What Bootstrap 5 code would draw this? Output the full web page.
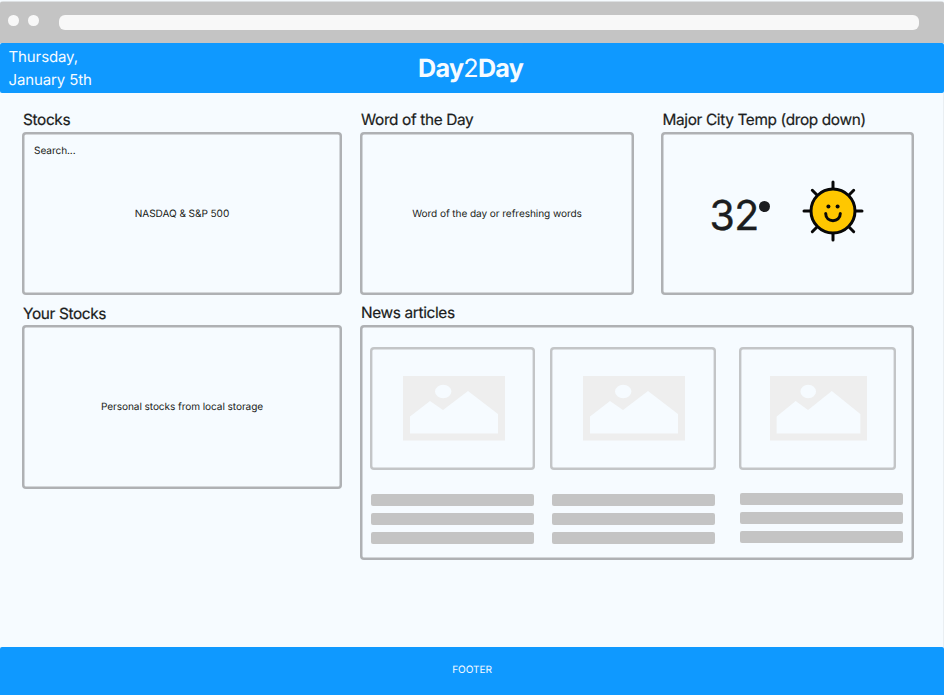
<!DOCTYPE html>
<html lang="en">
<head>
<meta charset="utf-8">
<meta name="viewport" content="width=device-width, initial-scale=1">
<title>Day2Day</title>
<link href="https://cdn.jsdelivr.net/npm/bootstrap@5.3.0/dist/css/bootstrap.min.css" rel="stylesheet">
<style>
body { font-family: Inter, sans-serif; text-rendering: geometricPrecision; background: #f6fbff; color: #1b1d20; height: 695px; overflow: hidden; border-top: 1px solid #f6fbff; }
.browser-bar { height: 42px; background: linear-gradient(#dde0e2 1px, #c4c4c4 1px); padding: 2px 25.3px 0 8.3px; border-radius: 3px 3px 0 0; }
.dot { width: 10.4px; height: 11px; border-radius: 50%; background: #f8f8f8; margin: -6px 9.8px 0 0; flex: none; }
.address { height: 15.4px; border-radius: 6px; background: #f8f8f8; margin-left: 10.3px; margin-top: -1px; }
.topbar { height: 50px; background: #0f99ff; color: #f6fbff; border-radius: 2px; }
.today { width: 410px; padding: 3px 0 0 8.5px; font-size: 15px; line-height: 22.5px; letter-spacing: -.11px; }
.brand { font-size: 25.2px; line-height: 52px; font-weight: 700; letter-spacing: -.75px; }
.brand span { font-weight: 400; }
.board { height: 554px; padding: 17px 30px 0 22px; border-right: 1px solid #e9eef2; display: grid; grid-template-columns: 320px 274px 253px; grid-template-rows: 193.5px 1fr; column-gap: 18px; }
.temp-area { margin-left: 9px; width: 253px; }
.news-area { grid-column: 2 / 4; width: 554px; }
.label-text { font-size: 15.4px; line-height: 19.4px; margin: 0 0 2.3px 1px; font-weight: 400; letter-spacing: -.36px; -webkit-text-stroke: .2px; white-space: nowrap; }
.temp-area .label-text { margin-left: 1.5px; }
.news-area .label-text { line-height: 17px; margin-bottom: 4.7px; }
.panel { height: 163.7px; border-radius: 4px; box-shadow: inset 0 0 0 2.5px #afb1b4; font-size: 10.1px; letter-spacing: -.08px; padding-top: 2px; }
.stock-search { padding: 11px 0 0 12px; line-height: 13px; height: 25px; color: #1b1d20; }
.stock-body { padding-bottom: 25px; }
.news-panel { height: 234.5px; padding: 21.7px 0 0 10px; }
.thumb { height: 123.3px; width: 165.3px; border-radius: 4px; box-shadow: inset 0 0 0 2.4px #c3c5c7; margin-bottom: 23.5px; padding-left: 2px; }
.thumb svg { width: 102px; height: 64.5px; }
.article { width: 165.3px; margin-right: 15.1px; }
.article-last { margin-left: 8px; margin-right: 0; }
.article-last .thumb { width: 157.3px; margin-bottom: 22.9px; }
.article-last .thumb svg { width: 97px; }
.line { height: 12px; width: 163px; border-radius: 2px; background: #c4c4c4; margin: 0 0 7.2px 1.2px; }
.degrees { font-size: 41px; line-height: 50px; letter-spacing: -.6px; font-weight: 400; -webkit-text-stroke: .4px; padding-left: .5px; }
.degree-dot { width: 11px; height: 11px; border-radius: 50%; background: #1b1d20; margin: 0 0 15.5px .2px; }
.sun { margin: 0 49px 7px auto; }
.footer-bar { height: 48px; background: #0f99ff; color: #f6fbff; font-size: 10.1px; letter-spacing: -.1px; border-radius: 2px 2px 0 0; padding-bottom: 1px; }
</style>
</head>
<body>
<div class="browser-bar d-flex align-items-center">
  <div class="dot"></div><div class="dot"></div>
  <div class="address flex-grow-1"></div>
</div>
<header class="topbar d-flex">
  <div class="today">Thursday,<br>January 5th</div>
  <div class="brand ps-2">Day<span>2</span>Day</div>
</header>
<main class="board">
  <section>
    <h2 class="label-text">Stocks</h2>
    <div class="panel d-flex flex-column">
      <div class="stock-search">Search...</div>
      <div class="stock-body flex-grow-1 d-flex align-items-center justify-content-center">NASDAQ &amp; S&amp;P 500</div>
    </div>
  </section>
  <section>
    <h2 class="label-text">Word of the Day</h2>
    <div class="panel d-flex align-items-center justify-content-center">Word of the day or refreshing words</div>
  </section>
  <section class="temp-area">
    <h2 class="label-text">Major City Temp (drop down)</h2>
    <div class="panel d-flex align-items-center">
      <div class="degrees ms-5">32</div>
      <div class="degree-dot"></div>
      <svg class="sun" width="64" height="64" viewBox="-32 -32 64 64" fill="none" stroke="#080808" stroke-width="3" stroke-linecap="round">
        <path d="M0-29V-23M0 23V29M-29 0H-23M23 0H29M-20.7-20.7L-16.5-16.5M20.7-20.7L16.5-16.5M-20.7 20.7L-16.5 16.5M20.7 20.7L16.5 16.5"/>
        <circle r="22" fill="#ffc700"/>
        <circle cx="-4.6" cy="-4.5" r="2" fill="#080808" stroke="none"/><circle cx="4.6" cy="-4.5" r="2" fill="#080808" stroke="none"/>
        <path d="M-7.3 2.5C-7.3 12 7.3 12 7.3 2.5"/>
      </svg>
    </div>
  </section>
  <section>
    <h2 class="label-text">Your Stocks</h2>
    <div class="panel d-flex align-items-center justify-content-center">Personal stocks from local storage</div>
  </section>
  <section class="news-area">
    <h2 class="label-text">News articles</h2>
    <div class="panel news-panel d-flex">
      <article class="article">
        <div class="thumb d-flex align-items-center justify-content-center">
          <svg viewBox="0 0 102 64.5" preserveAspectRatio="none"><path fill="#eee" fill-rule="evenodd" d="M0 0H102V64.5H0ZM7 40.5V57.5H95V38L65 15L40 34L27 25ZM32 15.5a8.2 6.7 0 1 0 16.4 0a8.2 6.7 0 1 0-16.4 0Z"/></svg>
        </div>
        <div class="line"></div><div class="line"></div><div class="line"></div>
      </article>
      <article class="article">
        <div class="thumb d-flex align-items-center justify-content-center">
          <svg viewBox="0 0 102 64.5" preserveAspectRatio="none"><path fill="#eee" fill-rule="evenodd" d="M0 0H102V64.5H0ZM7 40.5V57.5H95V38L65 15L40 34L27 25ZM32 15.5a8.2 6.7 0 1 0 16.4 0a8.2 6.7 0 1 0-16.4 0Z"/></svg>
        </div>
        <div class="line"></div><div class="line"></div><div class="line"></div>
      </article>
      <article class="article article-last">
        <div class="thumb d-flex align-items-center justify-content-center">
          <svg viewBox="0 0 102 64.5" preserveAspectRatio="none"><path fill="#eee" fill-rule="evenodd" d="M0 0H102V64.5H0ZM7 40.5V57.5H95V38L65 15L40 34L27 25ZM32 15.5a8.2 6.7 0 1 0 16.4 0a8.2 6.7 0 1 0-16.4 0Z"/></svg>
        </div>
        <div class="line"></div><div class="line"></div><div class="line"></div>
      </article>
    </div>
  </section>
</main>
<footer class="footer-bar d-flex align-items-center justify-content-center">FOOTER</footer>
<script src="https://cdn.jsdelivr.net/npm/bootstrap@5.3.0/dist/js/bootstrap.bundle.min.js"></script>
</body>
</html>
